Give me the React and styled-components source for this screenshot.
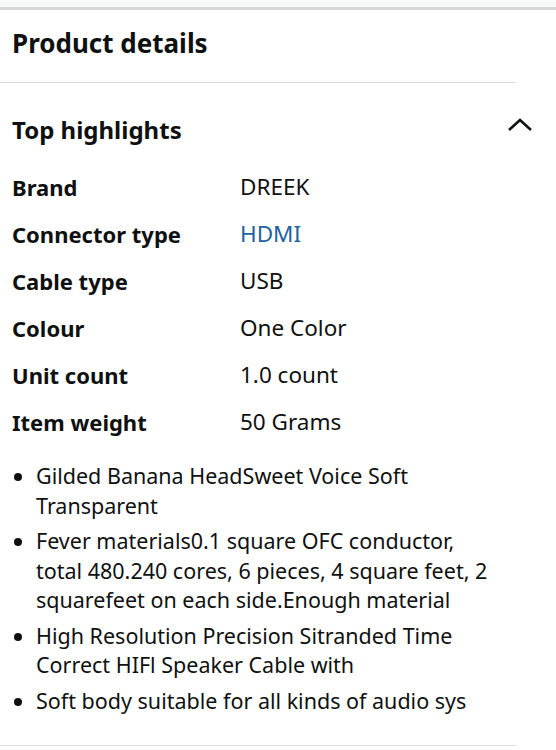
import React from "react";
import styled, { createGlobalStyle } from "styled-components";

const GlobalStyle = createGlobalStyle`
  html, body {
    margin: 0;
    padding: 0;
    background: #ffffff;
  }
  body {
    font-family: "Noto Sans", "Open Sans", Arial, sans-serif;
    color: #0f1111;
  }
`;

const specs = [
  { label: "Brand", value: "DREEK" },
  { label: "Connector type", value: "HDMI", link: true },
  { label: "Cable type", value: "USB" },
  { label: "Colour", value: "One Color" },
  { label: "Unit count", value: "1.0 count" },
  { label: "Item weight", value: "50 Grams" },
];

const bullets = [
  "Gilded Banana HeadSweet Voice Soft Transparent",
  "Fever materials0.1 square OFC conductor, total 480.240 cores, 6 pieces, 4 square feet, 2 squarefeet on each side.Enough material",
  "High Resolution Precision Sitranded Time Correct HIFl Speaker Cable with",
  "Soft body suitable for all kinds of audio sys",
];

const App = () => {
  return (
    <Page>
      <GlobalStyle />
      <TopStrip />
      <Header>
        <Title>Product details</Title>
      </Header>
      <Section>
        <SectionHead>
          <SectionTitle>Top highlights</SectionTitle>
          <Chevron width="26" height="16" viewBox="0 0 26 16">
            <path d="M2 13 L13 3 L24 13" fill="none" stroke="#0f1111" strokeWidth="2.6" />
          </Chevron>
        </SectionHead>
        <SpecTable>
          {specs.map((s) => (
            <SpecRow key={s.label}>
              <SpecLabel>{s.label}</SpecLabel>
              <SpecValue $link={s.link}>{s.value}</SpecValue>
            </SpecRow>
          ))}
        </SpecTable>
        <BulletList>
          {bullets.map((b) => (
            <Bullet key={b}>{b}</Bullet>
          ))}
        </BulletList>
      </Section>
    </Page>
  );
};

const Page = styled.div`
  width: 556px;
  height: 750px;
  overflow: hidden;
  background: #ffffff;
`;

const TopStrip = styled.div`
  height: 7px;
  background: #f7f8f8;
  border-bottom: 3px solid #d5d9d9;
`;

const Header = styled.div`
  margin-right: 40px;
  padding: 15px 12px 0;
  height: 57px;
  border-bottom: 1px solid #dddddd;
`;

const Title = styled.h1`
  margin: 0;
  font-size: 26px;
  font-weight: 700;
  line-height: 36px;
`;

const Section = styled.div`
  margin-right: 40px;
  border-bottom: 1px solid #dddddd;
  padding: 0 0 24px 12px;
  height: 663px;
  box-sizing: border-box;
`;

const SectionHead = styled.div`
  display: flex;
  align-items: center;
  justify-content: space-between;
  height: 92px;
  margin-right: -17px;
`;

const SectionTitle = styled.h2`
  margin: 0;
  font-size: 24px;
  font-weight: 700;
`;

const Chevron = styled.svg`
  display: block;
  margin-bottom: 9px;
`;

const SpecTable = styled.div`
  display: flex;
  flex-direction: column;
  margin-top: -12px;
`;

const SpecRow = styled.div`
  display: grid;
  grid-template-columns: 228px 1fr;
  height: 47px;
  align-items: center;
`;

const SpecLabel = styled.span`
  font-size: 22px;
  font-weight: 700;
`;

const SpecValue = styled.span`
  font-size: 22.5px;
  color: ${(p) => (p.$link ? "#2162a1" : "#0f1111")};
`;

const BulletList = styled.ul`
  margin: 16px 14px 0 0;
  padding: 0 0 0 24px;
  display: flex;
  flex-direction: column;
  gap: 6px;
`;

const Bullet = styled.li`
  font-size: 21.5px;
  line-height: 29.5px;
`;

export default App;
